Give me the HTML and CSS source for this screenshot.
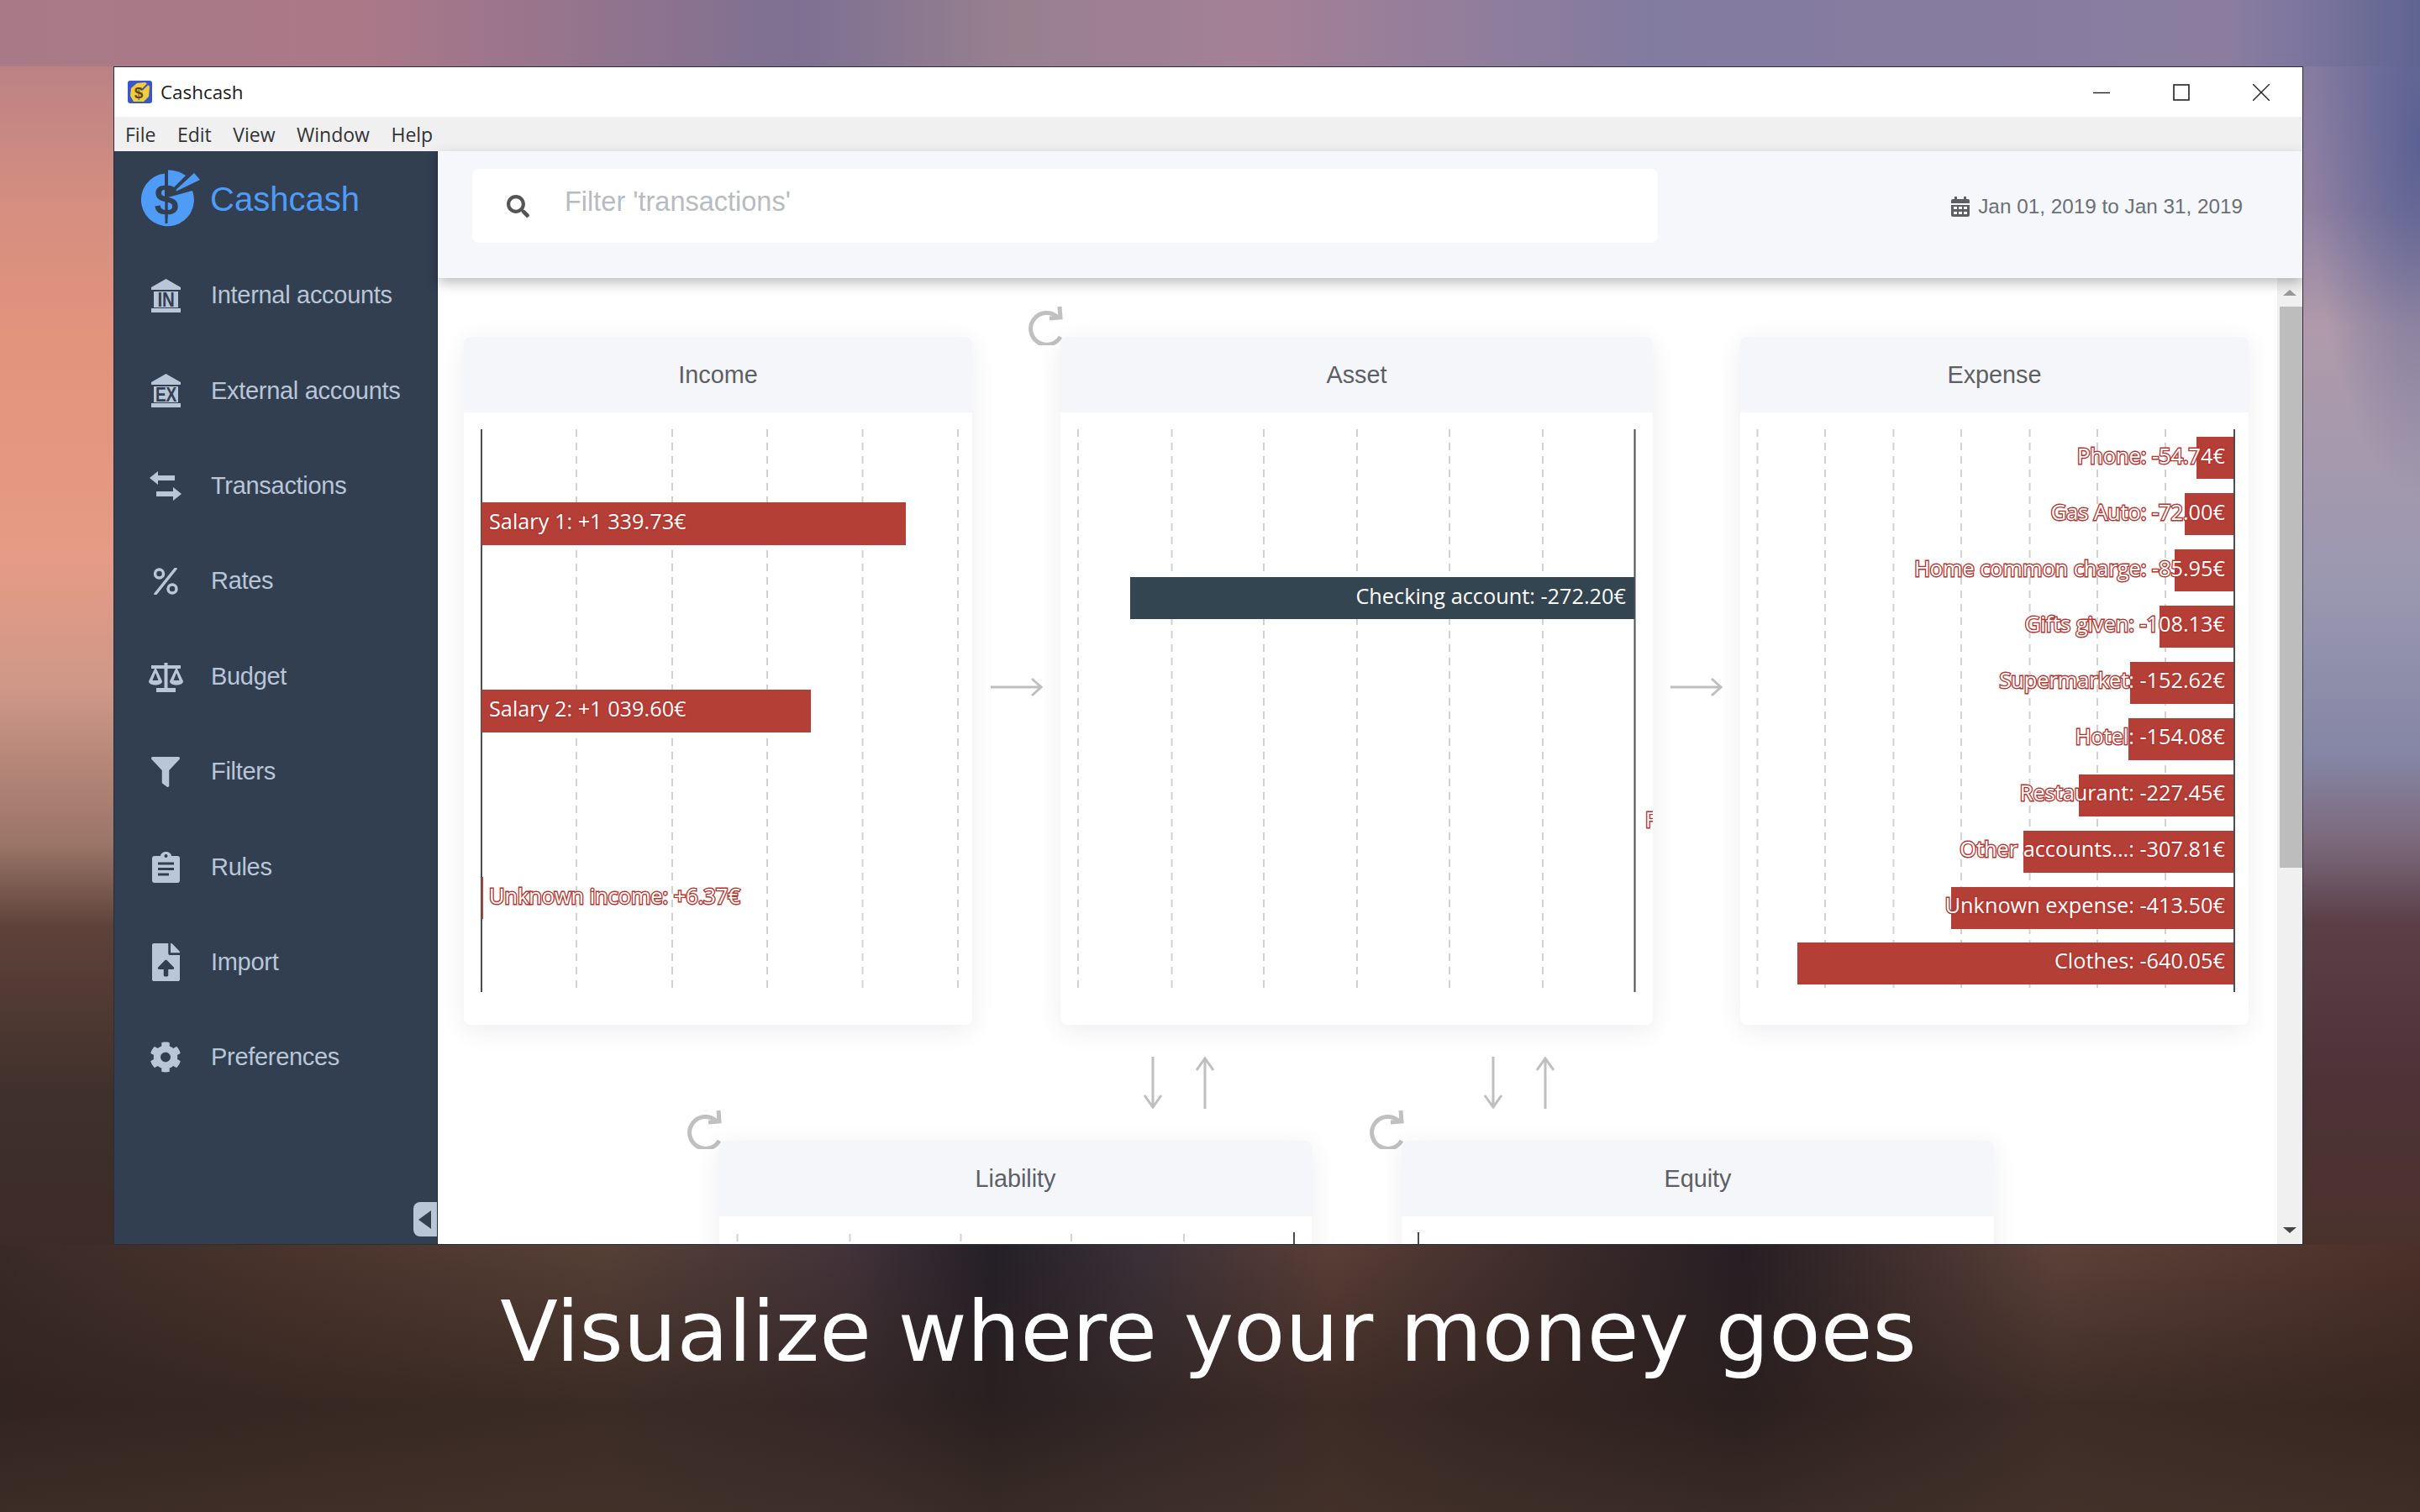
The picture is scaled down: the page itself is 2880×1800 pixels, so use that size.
FILE: index.html
```html
<!DOCTYPE html>
<html lang="en">
<head>
  <meta charset="UTF-8">
  <title>Cashcash</title>
  <link rel="stylesheet" href="styles.css">
</head>
<body>
  <div class="window">
    <div class="titlebar">
      <svg class="app-icon" viewBox="0 0 29 27">
        <rect width="29" height="27" rx="3" fill="#3a57c9"/>
        <path d="M11 3 L21 2 L26 7 L25 19 L19 25 L7 25 L3 18 L4 9 Z" fill="#f6cb3a"/>
        <path d="M17 11L25 3" stroke="#3a57c9" stroke-width="2"/>
        <text class="app-icon-glyph" x="13" y="21">$</text>
      </svg>
      <span class="app-name">Cashcash</span>
      <div class="win-controls">
        <svg class="win-btn" viewBox="0 0 20 20"><path d="M0 10.5H20" stroke="#222" stroke-width="1.4"/></svg>
        <svg class="win-btn" viewBox="0 0 20 20"><rect x="1" y="1" width="18" height="18" fill="none" stroke="#222" stroke-width="1.6"/></svg>
        <svg class="win-btn" viewBox="0 0 20 20"><path d="M0 0L20 20M20 0L0 20" stroke="#222" stroke-width="1.4"/></svg>
      </div>
    </div>
    <div class="menubar">
      <span class="menu-item">File</span>
      <span class="menu-item">Edit</span>
      <span class="menu-item">View</span>
      <span class="menu-item">Window</span>
      <span class="menu-item">Help</span>
    </div>

    <div class="app">
      <aside class="sidebar">
        <div class="brand">
          <svg class="brand-logo" viewBox="14 10 78 76">
            <path d="M79 37 A31.5 31.5 0 1 1 46 16.5 L46 46 Z" fill="#4f9bf8"/>
            <path d="M50 12.5 A34 34 0 0 1 71 19 L56 34 L50 35 Z" fill="#4f9bf8"/>
            <path d="M55 40 L81 16 L88 24 Z" fill="#4f9bf8"/>
            <text class="brand-glyph" x="48" y="66">$</text>
            <path d="M48 14V76" stroke="#323f51" stroke-width="3"/>
          </svg>
          <span class="brand-name">Cashcash</span>
        </div>
        <nav class="nav">
          <a class="nav-item">
            <span class="nav-icon">
              <svg width="35" height="40" viewBox="0 0 35 40">
                <path d="M17.5 0L35 10V13H0V10Z M3 15H32V34H3Z M0 35H35V40H0Z" fill="#b9c6d8"/>
                <text class="bank-label" x="17.500" y="33" textLength="20" lengthAdjust="spacingAndGlyphs">IN</text>
              </svg>
            </span>
            Internal accounts
          </a>
          <a class="nav-item">
            <span class="nav-icon">
              <svg width="35" height="40" viewBox="0 0 35 40">
                <path d="M17.5 0L35 10V13H0V10Z M3 15H32V34H3Z M0 35H35V40H0Z" fill="#b9c6d8"/>
                <text class="bank-label" x="17.500" y="33" textLength="25" lengthAdjust="spacingAndGlyphs">EX</text>
              </svg>
            </span>
            External accounts
          </a>
          <a class="nav-item">
            <span class="nav-icon">
              <svg width="38" height="35" viewBox="0 0 38 35">
                <path d="M10 0L0 8L10 16V11H30V5H10Z M28 19V24H8V30H28V35L38 27Z" fill="#b9c6d8"/>
              </svg>
            </span>
            Transactions
          </a>
          <a class="nav-item">
            <span class="nav-icon">
              <svg width="30" height="32" viewBox="0 0 30 32">
                <path d="M27 1L3 31" stroke="#b9c6d8" stroke-width="3.500" stroke-linecap="round"/>
                <circle cx="7.500" cy="7" r="5" fill="none" stroke="#b9c6d8" stroke-width="3.500"/>
                <circle cx="23" cy="25" r="5" fill="none" stroke="#b9c6d8" stroke-width="3.500"/>
              </svg>
            </span>
            Rates
          </a>
          <a class="nav-item">
            <span class="nav-icon">
              <svg width="43" height="37" viewBox="0 0 43 37">
                <path d="M19.500 5H4V9H19.500V32H10V37H33V32H23.500V9H39V5H23.500V2H19.500Z" fill="#b9c6d8"/>
                <path d="M9 7L1 24C1 30 17 30 17 24Z M34 7L26 24C26 30 42 30 42 24Z" fill="#b9c6d8"/>
                <path d="M9 14L5.500 23H12.500Z M34 14L30.500 23H37.500Z" fill="#323f51"/>
              </svg>
            </span>
            Budget
          </a>
          <a class="nav-item">
            <span class="nav-icon">
              <svg width="34" height="36" viewBox="0 0 512 512" preserveAspectRatio="none">
                <path d="M487.976 0H24.028C2.71 0-8.047 25.866 7.058 40.971L192 225.941V432c0 7.831 3.821 15.17 10.237 19.662l80 55.98C298.02 518.69 320 507.493 320 487.98V225.941l184.947-184.97C520.021 25.896 509.338 0 487.976 0z" fill="#b9c6d8"/>
              </svg>
            </span>
            Filters
          </a>
          <a class="nav-item">
            <span class="nav-icon">
              <svg width="33" height="37" viewBox="0 0 33 37">
                <path d="M3 5H10A6.500 5 0 0 1 23 5H30A3 3 0 0 1 33 8V34A3 3 0 0 1 30 37H3A3 3 0 0 1 0 34V8A3 3 0 0 1 3 5Z" fill="#b9c6d8"/>
                <circle cx="16.500" cy="5" r="2" fill="#323f51"/>
                <path d="M7 14H26M7 20.500H26M7 27H20" stroke="#323f51" stroke-width="3"/>
              </svg>
            </span>
            Rules
          </a>
          <a class="nav-item">
            <span class="nav-icon">
              <svg width="33" height="45" viewBox="0 0 384 512" preserveAspectRatio="none">
                <path d="M224 136V0H24C10.700 0 0 10.700 0 24v464c0 13.300 10.700 24 24 24h336c13.300 0 24-10.700 24-24V160H248c-13.200 0-24-10.800-24-24zm65.180 216.010H224v80c0 8.840-7.160 16-16 16h-32c-8.840 0-16-7.160-16-16v-80H94.820c-14.280 0-21.410-17.290-11.270-27.360l96.420-95.700c6.650-6.610 17.390-6.610 24.040 0l96.420 95.700c10.150 10.070 3.030 27.360-11.250 27.360zM377 105L279.100 7c-4.500-4.500-10.600-7-17-7H256v128h128v-6.100c0-6.300-2.500-12.400-7-16.900z" fill="#b9c6d8"/>
              </svg>
            </span>
            Import
          </a>
          <a class="nav-item">
            <span class="nav-icon">
              <svg width="38" height="37" viewBox="0 0 512 512" preserveAspectRatio="none">
                <path d="M487.400 315.700l-42.600-24.600c4.300-23.200 4.300-47 0-70.200l42.600-24.600c4.900-2.800 7.100-8.600 5.500-14-11.100-35.600-30-67.800-54.700-94.600-3.800-4.100-10-5.100-14.800-2.300L380.800 110c-17.900-15.400-38.500-27.300-60.800-35.100V25.800c0-5.600-3.900-10.500-9.400-11.700-36.700-8.200-74.300-7.800-109.200 0-5.500 1.200-9.400 6.100-9.400 11.700V75c-22.200 7.900-42.800 19.800-60.800 35.100L88.700 85.500c-4.900-2.800-11-1.900-14.800 2.300-24.700 26.700-43.600 58.900-54.700 94.600-1.700 5.400.6 11.200 5.500 14L67.300 221c-4.300 23.200-4.300 47 0 70.200l-42.600 24.600c-4.900 2.800-7.100 8.600-5.500 14 11.100 35.600 30 67.800 54.700 94.600 3.800 4.100 10 5.100 14.800 2.300l42.600-24.600c17.900 15.400 38.500 27.300 60.800 35.100v49.200c0 5.600 3.900 10.500 9.400 11.700 36.700 8.200 74.300 7.800 109.200 0 5.500-1.200 9.400-6.100 9.400-11.700v-49.200c22.200-7.900 42.800-19.800 60.800-35.100l42.600 24.600c4.900 2.800 11 1.900 14.800-2.300 24.700-26.700 43.600-58.900 54.700-94.600 1.500-5.500-.7-11.300-5.600-14.100zM256 336c-44.100 0-80-35.900-80-80s35.900-80 80-80 80 35.900 80 80-35.900 80-80 80z" fill="#b9c6d8"/>
              </svg>
            </span>
            Preferences
          </a>
        </nav>
        <div class="collapse-tab"><span class="collapse-arrow"></span></div>
      </aside>

      <main class="main">
        <header class="topbar">
          <div class="search">
            <svg class="search-icon" viewBox="0 0 512 512">
              <path d="M505 442.700L405.300 343c-4.500-4.500-10.600-7-17-7H372c27.600-35.300 44-79.700 44-128C416 93.100 322.900 0 208 0S0 93.100 0 208s93.100 208 208 208c48.300 0 92.700-16.400 128-44v16.300c0 6.400 2.500 12.500 7 17l99.700 99.700c9.400 9.400 24.600 9.400 33.900 0l28.300-28.300c9.400-9.400 9.400-24.600.1-34zM208 336c-70.700 0-128-57.200-128-128 0-70.700 57.200-128 128-128 70.700 0 128 57.200 128 128 0 70.700-57.200 128-128 128z" fill="#555"/>
            </svg>
            <span class="search-placeholder">Filter 'transactions'</span>
          </div>
          <div class="date-range">
            <svg class="date-icon" viewBox="0 0 22 24">
              <path d="M4 0H7V3H15V0H18V3H20A2 2 0 0 1 22 5V8H0V5A2 2 0 0 1 2 3H4Z M0 10H22V22A2 2 0 0 1 20 24H2A2 2 0 0 1 0 22Z" fill="#5c6066"/>
              <path d="M3 12H7V15H3Z M9 12H13V15H9Z M15 12H19V15H15Z M3 18H7V21H3Z M9 18H13V21H9Z M15 18H19V21H15Z" fill="#f5f7fb"/>
            </svg>
            Jan 01, 2019 to Jan 31, 2019
          </div>
        </header>

        <div class="content">
          <div class="board">
            <div class="board-row">
              <section class="card card-small">
                <div class="card-head">Income</div>
                <svg class="chart" viewBox="552 491 605 729">
                  <path class="grid" d="M686 511V1181M800 511V1181M913 511V1181M1026.500 511V1181M1140 511V1181"/>
                  <path class="axis" d="M573 511V1181"/>
                  <rect class="bar" x="573" y="598" width="505" height="51"/>
                  <rect class="bar" x="573" y="821" width="392" height="51"/>
                  <rect class="bar" x="573" y="1044" width="2" height="50"/>
                  <text class="label" x="582" y="630">Salary 1: +1 339.73€</text>
                  <text class="label" x="582" y="853">Salary 2: +1 039.60€</text>
                  <text class="label" x="582" y="1076">Unknown income: +6.37€</text>
                </svg>
              </section>
              <div class="link">
                <svg class="arrow-h" viewBox="0 0 62 24"><path d="M0 12H60M49 2L60 12L49 22"/></svg>
              </div>
              <div class="card-wrap">
                <svg class="redo" viewBox="0 0 44 48"><path d="M36 14A19 19 0 1 0 40 38M39 2L40 15L27 16"/></svg>
                <section class="card card-wide">
                  <div class="card-head">Asset</div>
                  <svg class="chart" viewBox="1262 491 705 729">
                    <path class="grid" d="M1283 511V1181M1394.500 511V1181M1504 511V1181M1615 511V1181M1725 511V1181M1836 511V1181"/>
                    <rect class="bar bar-dark" x="1345" y="687" width="600" height="50"/>
                    <path class="axis" d="M1945.500 511V1181"/>
                    <text class="label label-end label-dark" x="1935" y="719">Checking account: -272.20€</text>
                    <text class="label" x="1958" y="985">F</text>
                  </svg>
                </section>
              </div>
              <div class="link link-tight">
                <svg class="arrow-h" viewBox="0 0 62 24"><path d="M0 12H60M49 2L60 12L49 22"/></svg>
              </div>
              <section class="card card-small">
                <div class="card-head">Expense</div>
                <svg class="chart" viewBox="2071 491 605 729">
                  <path class="grid" d="M2091.500 511V1181M2172 511V1181M2253.500 511V1181M2334 511V1181M2415.500 511V1181M2496 511V1181M2577 511V1181"/>
                  <rect class="bar" x="2614" y="520" width="45" height="50"/>
                  <rect class="bar" x="2600" y="587" width="59" height="50"/>
                  <rect class="bar" x="2588" y="654" width="71" height="50"/>
                  <rect class="bar" x="2570" y="721" width="89" height="50"/>
                  <rect class="bar" x="2535" y="788" width="124" height="50"/>
                  <rect class="bar" x="2533" y="855" width="126" height="50"/>
                  <rect class="bar" x="2474" y="922" width="185" height="50"/>
                  <rect class="bar" x="2408" y="989" width="251" height="50"/>
                  <rect class="bar" x="2322" y="1056" width="337" height="50"/>
                  <rect class="bar" x="2139" y="1122" width="520" height="50"/>
                  <path class="axis" d="M2659 511V1181"/>
                  <text class="label label-end" x="2648" y="552">Phone: -54.74€</text>
                  <text class="label label-end" x="2648" y="619">Gas Auto: -72.00€</text>
                  <text class="label label-end" x="2648" y="686">Home common charge: -85.95€</text>
                  <text class="label label-end" x="2648" y="752">Gifts given: -108.13€</text>
                  <text class="label label-end" x="2648" y="819">Supermarket: -152.62€</text>
                  <text class="label label-end" x="2648" y="886">Hotel: -154.08€</text>
                  <text class="label label-end" x="2648" y="953">Restaurant: -227.45€</text>
                  <text class="label label-end" x="2648" y="1020">Other accounts...: -307.81€</text>
                  <text class="label label-end" x="2648" y="1087">Unknown expense: -413.50€</text>
                  <text class="label label-end" x="2648" y="1153">Clothes: -640.05€</text>
                </svg>
              </section>
            </div>

            <div class="flow-row">
              <div class="flow-pair">
                <svg class="arrow-v" viewBox="0 0 24 62"><path d="M12 0V60M2 46L12 60L22 46"/></svg>
                <svg class="arrow-v" viewBox="0 0 24 62"><path d="M12 62V2M2 16L12 2L22 16"/></svg>
              </div>
              <div class="flow-pair">
                <svg class="arrow-v" viewBox="0 0 24 62"><path d="M12 0V60M2 46L12 60L22 46"/></svg>
                <svg class="arrow-v" viewBox="0 0 24 62"><path d="M12 62V2M2 16L12 2L22 16"/></svg>
              </div>
            </div>

            <div class="board-row board-row-low">
              <div class="card-wrap">
                <svg class="redo" viewBox="0 0 44 48"><path d="M36 14A19 19 0 1 0 40 38M39 2L40 15L27 16"/></svg>
                <section class="card card-wide">
                  <div class="card-head">Liability</div>
                  <svg class="chart chart-cut" viewBox="856 1449 705 40">
                    <path class="grid" d="M877.500 1470V1489M1011.500 1470V1489M1143.500 1470V1489M1275 1470V1489M1409 1470V1489"/>
                    <path class="axis" d="M1540 1468V1489"/>
                  </svg>
                </section>
              </div>
              <div class="card-wrap">
                <svg class="redo" viewBox="0 0 44 48"><path d="M36 14A19 19 0 1 0 40 38M39 2L40 15L27 16"/></svg>
                <section class="card card-wide">
                  <div class="card-head">Equity</div>
                  <svg class="chart chart-cut" viewBox="1668 1449 705 40">
                    <path class="axis" d="M1688 1468V1489"/>
                  </svg>
                </section>
              </div>
            </div>
          </div>

          <div class="scrollbar">
            <div class="scroll-btn"><span class="scroll-up"></span></div>
            <div class="scroll-thumb"></div>
            <div class="scroll-track"></div>
            <div class="scroll-btn"><span class="scroll-down"></span></div>
          </div>
        </div>
      </main>
    </div>
  </div>

  <p class="caption">Visualize where your money goes</p>
</body>
</html>
```

FILE: styles.css
```css
* {
  margin: 0;
  padding: 0;
  box-sizing: border-box;
}

html, body {
  width: 2880px;
  height: 1800px;
  overflow: hidden;
}

/* blurred wallpaper: only the strips around the window show */
body {
  padding: 79px 0 0 135px;
  font-family: "Liberation Sans", Arial, sans-serif;
  background-color: #3c2b27;
  background-repeat: no-repeat;
  background-image:
    linear-gradient(90deg, #a87a88 0%, #ab7888 15%, #7d7092 33%, #98808f 42%, #a48096 52%, #827ba0 68%, #8a7da0 92%, #7d769e 95%, #5f6590 100%),
    radial-gradient(ellipse 130px 420px at 100% 90px, rgba(70, 85, 140, 0.7), rgba(70, 85, 140, 0)),
    linear-gradient(180deg, #bb8285 0%, #d58e80 11.5%, #e3947c 24%, #e59b85 42%, #cf9888 52.5%, #9a7568 66%, #5e423a 73%, #40302b 87%, #3c2b27 100%),
    linear-gradient(180deg, #857ba0 0%, #8f80a2 12%, #b09aaa 22%, #9a98b0 44%, #8585a5 58.5%, #7c6a7c 65.6%, #5a3f47 72.8%, #4d3338 86%, #4a322c 100%),
    linear-gradient(180deg, rgba(30, 20, 20, 0) 0%, rgba(45, 32, 28, 0.65) 60%, rgba(60, 45, 38, 0.8) 100%),
    linear-gradient(90deg, #3a2a27 0%, #4a342c 12%, #564036 25%, #43333a 35%, #241f27 41%, #3a3038 47%, #5a3e36 55%, #3a2a2a 65%, #271e24 72%, #5c4239 85%, #4a3028 100%);
  background-size:
    2880px 79px,
    139px 1403px,
    135px 1403px,
    139px 1403px,
    2880px 318px,
    2880px 318px;
  background-position:
    0 0,
    2741px 79px,
    0 79px,
    2741px 79px,
    0 1482px,
    0 1482px;
}

.window {
  width: 2606px;
  height: 1403px;
  display: flex;
  flex-direction: column;
  background: #fff;
  border: 1px solid #2c2c3a;
  overflow: hidden;
}

/* title bar */
.titlebar {
  height: 59px;
  display: flex;
  align-items: center;
  padding-left: 16px;
  background: #fff;
  flex: none;
}

.app-icon {
  width: 29px;
  height: 27px;
  margin-right: 10px;
}

.app-icon-glyph {
  font-size: 19px;
  font-weight: 700;
  text-anchor: middle;
  fill: #5a4a20;
}

.app-name {
  font-family: "Open Sans", sans-serif;
  font-size: 22.4px;
  color: #1c1c1c;
}

.win-controls {
  margin-left: auto;
  display: flex;
  gap: 75px;
  padding-right: 39px;
}

.win-btn {
  width: 20px;
  height: 20px;
}

/* menu */
.menubar {
  height: 41px;
  display: flex;
  align-items: center;
  gap: 25.5px;
  padding-left: 13px;
  background: #f0f0f0;
  flex: none;
}

.menu-item {
  font-family: "Open Sans", sans-serif;
  font-size: 23px;
  color: #333;
}

.app {
  flex: 1;
  display: flex;
  min-height: 0;
}

/* sidebar */
.sidebar {
  position: relative;
  width: 385px;
  flex: none;
  background: #323f51;
  border-right: 1px solid #1f2b3f;
}

.brand {
  height: 115px;
  display: flex;
  align-items: center;
  padding-left: 28px;
}

.brand-logo {
  width: 78px;
  height: 76px;
  margin-right: 8px;
}

.brand-glyph {
  font-size: 52px;
  text-anchor: middle;
  fill: #323f51;
  font-weight: 700;
}

.brand-name {
  font-size: 40px;
  color: #4f9bf8;
}

.nav-item {
  height: 113.4px;
  display: flex;
  align-items: center;
  padding-left: 25px;
  font-size: 29px;
  letter-spacing: -0.3px;
  color: #b9c6d8;
}

.nav-icon {
  width: 72px;
  margin-right: 18px;
  display: flex;
  justify-content: center;
}

.bank-label {
  font-size: 24px;
  font-weight: 700;
  text-anchor: middle;
  fill: #323f51;
}

.collapse-tab {
  position: absolute;
  right: 0;
  bottom: 9px;
  width: 28px;
  height: 41px;
  display: flex;
  align-items: center;
  padding-left: 6px;
  background: #b9c6d8;
  border-radius: 8px 0 0 8px;
}

.collapse-arrow {
  border-style: solid;
  border-width: 11px 15px 11px 0;
  border-color: transparent #323f51 transparent transparent;
}

/* top bar */
.main {
  flex: 1;
  display: flex;
  flex-direction: column;
  min-width: 0;
}

.topbar {
  position: relative;
  z-index: 1;
  height: 151px;
  flex: none;
  display: flex;
  align-items: flex-start;
  padding: 21px 71px 0 41px;
  background: #f5f7fb;
  box-shadow: 0 6px 14px rgba(0, 0, 0, 0.25);
}

.search {
  width: 1411px;
  height: 88px;
  display: flex;
  align-items: center;
  padding-left: 41px;
  background: #fff;
  border-radius: 8px;
}

.search-icon {
  width: 27px;
  height: 27px;
  margin-right: 42px;
}

.search-placeholder {
  margin-bottom: 9px;
  font-size: 32.5px;
  color: #b7bbc2;
}

.date-range {
  margin-left: auto;
  margin-top: 31px;
  display: flex;
  align-items: center;
  gap: 10px;
  font-size: 24.3px;
  color: #6b6f75;
}

.date-icon {
  width: 22px;
  height: 24px;
}

/* content */
.content {
  flex: 1;
  display: flex;
  min-height: 0;
}

.board {
  flex: 1;
  min-width: 0;
  overflow: hidden;
  padding: 70px 0 0 31px;
  background: #fff;
}

.board-row {
  display: flex;
}

.board-row-low {
  padding-left: 304px;
  gap: 107px;
}

.card-wrap {
  position: relative;
  flex: none;
}

.card {
  position: relative;
  display: flex;
  flex-direction: column;
  height: 819px;
  flex: none;
  background: #fff;
  border-radius: 8px;
  box-shadow: 0 6px 30px rgba(50, 60, 90, 0.09);
  overflow: hidden;
}

.card-small {
  width: 605px;
}

.card-wide {
  width: 705px;
}

.card-head {
  height: 90px;
  flex: none;
  display: flex;
  align-items: center;
  justify-content: center;
  background: #f5f6fa;
  font-size: 28.8px;
  color: #5c6066;
}

.chart {
  display: block;
  width: 100%;
  height: 729px;
}

.chart-cut {
  height: 40px;
}

.grid {
  fill: none;
  stroke: #d2d2d2;
  stroke-width: 2;
  stroke-dasharray: 9 7;
}

.axis {
  fill: none;
  stroke: #4a4d52;
  stroke-width: 2;
}

.bar {
  fill: #b33f36;
}

.bar-dark {
  fill: #344552;
}

.label {
  font-family: "Open Sans", sans-serif;
  font-size: 25.3px;
  fill: #fff;
  stroke: #b5352f;
  stroke-width: 2.8;
  paint-order: stroke;
}

.label-end {
  text-anchor: end;
}

.label-dark {
  stroke: #344552;
}

.link {
  width: 105px;
  flex: none;
  display: flex;
  align-items: center;
  justify-content: center;
  padding-top: 15px;
}

.link-tight {
  width: 104px;
}

.arrow-h {
  width: 62px;
  height: 24px;
  fill: none;
  stroke: #bfbfbf;
  stroke-width: 3;
}

.redo {
  position: absolute;
  left: -40px;
  top: -38px;
  width: 44px;
  height: 48px;
  fill: none;
  stroke: #c0c0c0;
  stroke-width: 5;
}

.flow-row {
  height: 138px;
  display: flex;
  align-items: center;
  gap: 319px;
  padding-left: 808px;
}

.flow-pair {
  display: flex;
  gap: 38px;
}

.arrow-v {
  width: 24px;
  height: 62px;
  fill: none;
  stroke: #bfbfbf;
  stroke-width: 3;
}

/* scrollbar */
.scrollbar {
  width: 30px;
  flex: none;
  display: flex;
  flex-direction: column;
  background: #f0f0f0;
}

.scroll-btn {
  height: 34px;
  flex: none;
  display: flex;
  align-items: center;
  justify-content: center;
}

.scroll-up {
  border-style: solid;
  border-width: 0 8px 7px 8px;
  border-color: transparent transparent #9a9a9a transparent;
}

.scroll-down {
  border-style: solid;
  border-width: 7px 8px 0 8px;
  border-color: #444 transparent transparent transparent;
}

.scroll-thumb {
  height: 668px;
  margin-left: 3px;
  background: #bdbdbd;
  flex: none;
}

.scroll-track {
  flex: 1;
}

.caption {
  margin: 44px 0 0 0;
  width: 2606px;
  text-align: center;
  font-family: "DejaVu Sans", sans-serif;
  font-size: 100.3px;
  line-height: 1.2;
  color: #fff;
}
```
